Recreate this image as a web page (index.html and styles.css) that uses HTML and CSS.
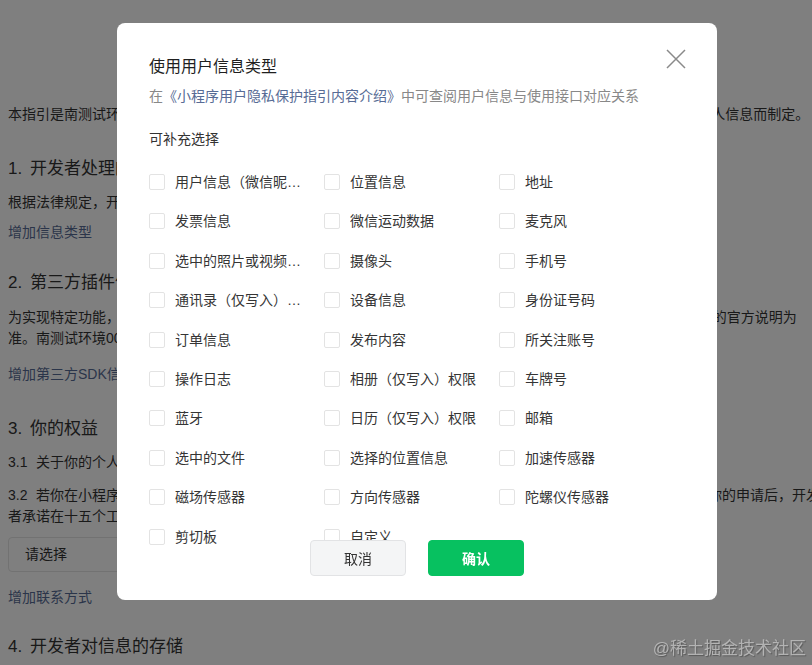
FILE: index.html
```html
<!DOCTYPE html>
<html lang="zh-CN">
<head>
<meta charset="utf-8">
<title>用户隐私保护指引</title>
<link rel="stylesheet" href="styles.css">
</head>
<body>
<main class="guide">
  <p class="lead">本指引是南测试环境00 小程序开发者 南测试环境0（以下简称开发者）为向你说明在使用小程序过程中处理你的个人信息而制定。</p>

  <h2 class="sec sec-1"><span class="sec-num">1.</span>开发者处理的信息</h2>
  <p class="text text-law">根据法律规定，开发者仅处理实现小程序功能所必要的信息。</p>
  <a class="add add-info" href="#">增加信息类型</a>

  <h2 class="sec sec-2"><span class="sec-num">2.</span>第三方插件信息</h2>
  <p class="text text-plugin">为实现特定功能，开发者可能会需要接入由第三方提供的插件/SDK。第三方插件的个人信息处理规则，请以其公示的官方说明为准。南测试环境00小程序已接入的第三方插件信息如下：</p>
  <a class="add add-sdk" href="#">增加第三方SDK信息</a>

  <h2 class="sec sec-3"><span class="sec-num">3.</span>你的权益</h2>
  <p class="text text-31"><span class="sub-num">3.1</span>关于你的个人信息，你可以随时在小程序中进行查阅、复制、更正或删除。</p>
  <p class="text text-32"><span class="sub-num">3.2</span>若你在小程序中，向开发者提出查阅、复制、更正、补充、删除你的个人信息或撤回授权同意等请求，在收到你的申请后，开发者承诺在十五个工作日内完成核查和处理。</p>
  <div class="select">请选择</div>
  <a class="add add-contact" href="#">增加联系方式</a>

  <h2 class="sec sec-4"><span class="sec-num">4.</span>开发者对信息的存储</h2>
</main>

<div class="mask"></div>

<section class="dialog">
  <h3 class="dialog-title">使用用户信息类型</h3>
  <p class="dialog-desc">在<a class="desc-link" href="#">《小程序用户隐私保护指引内容介绍》</a>中可查阅用户信息与使用接口对应关系</p>
  <p class="dialog-label">可补充选择</p>
  <ul class="options">
    <li class="option"><span class="cb"></span><span class="opt-text">用户信息（微信昵称、头像）</span></li>
    <li class="option"><span class="cb"></span><span class="opt-text">位置信息</span></li>
    <li class="option"><span class="cb"></span><span class="opt-text">地址</span></li>
    <li class="option"><span class="cb"></span><span class="opt-text">发票信息</span></li>
    <li class="option"><span class="cb"></span><span class="opt-text">微信运动数据</span></li>
    <li class="option"><span class="cb"></span><span class="opt-text">麦克风</span></li>
    <li class="option"><span class="cb"></span><span class="opt-text">选中的照片或视频信息</span></li>
    <li class="option"><span class="cb"></span><span class="opt-text">摄像头</span></li>
    <li class="option"><span class="cb"></span><span class="opt-text">手机号</span></li>
    <li class="option"><span class="cb"></span><span class="opt-text">通讯录（仅写入）权限</span></li>
    <li class="option"><span class="cb"></span><span class="opt-text">设备信息</span></li>
    <li class="option"><span class="cb"></span><span class="opt-text">身份证号码</span></li>
    <li class="option"><span class="cb"></span><span class="opt-text">订单信息</span></li>
    <li class="option"><span class="cb"></span><span class="opt-text">发布内容</span></li>
    <li class="option"><span class="cb"></span><span class="opt-text">所关注账号</span></li>
    <li class="option"><span class="cb"></span><span class="opt-text">操作日志</span></li>
    <li class="option"><span class="cb"></span><span class="opt-text">相册（仅写入）权限</span></li>
    <li class="option"><span class="cb"></span><span class="opt-text">车牌号</span></li>
    <li class="option"><span class="cb"></span><span class="opt-text">蓝牙</span></li>
    <li class="option"><span class="cb"></span><span class="opt-text">日历（仅写入）权限</span></li>
    <li class="option"><span class="cb"></span><span class="opt-text">邮箱</span></li>
    <li class="option"><span class="cb"></span><span class="opt-text">选中的文件</span></li>
    <li class="option"><span class="cb"></span><span class="opt-text">选择的位置信息</span></li>
    <li class="option"><span class="cb"></span><span class="opt-text">加速传感器</span></li>
    <li class="option"><span class="cb"></span><span class="opt-text">磁场传感器</span></li>
    <li class="option"><span class="cb"></span><span class="opt-text">方向传感器</span></li>
    <li class="option"><span class="cb"></span><span class="opt-text">陀螺仪传感器</span></li>
    <li class="option"><span class="cb"></span><span class="opt-text">剪切板</span></li>
    <li class="option"><span class="cb"></span><span class="opt-text">自定义</span></li>
  </ul>
  <div class="dialog-footer">
    <button class="btn btn-cancel" type="button">取消</button>
    <button class="btn btn-ok" type="button">确认</button>
  </div>
  <button class="dialog-close" type="button" aria-label="关闭">
    <svg width="20" height="20" viewBox="0 0 20 20"><path d="M1 1L19 19M19 1L1 19" stroke="#8a8a8a" stroke-width="1.5" fill="none"/></svg>
  </button>
</section>

<div class="watermark">@稀土掘金技术社区</div>
</body>
</html>
```

FILE: styles.css
```css
html, body {
  margin: 0;
  padding: 0;
  overflow: hidden;
  background: #fff;
}
body {
  font-family: "Liberation Sans", "Noto Sans CJK SC", sans-serif;
  font-size: 14px;
  color: #333;
}
.guide {
  width: 814px;
  padding: 104px 0 0 8px;
}
.lead, .text {
  margin: 0;
  line-height: 21px;
  font-size: 14px;
  color: #333;
}
.sec {
  margin: 0;
  font-size: 17px;
  font-weight: normal;
  line-height: 24px;
  color: #333;
}
.sec-num {
  display: inline-block;
  width: 22px;
}
.sub-num {
  display: inline-block;
  width: 28px;
}
.add {
  display: block;
  width: max-content;
  line-height: 21px;
  font-size: 14px;
  color: #576b95;
  text-decoration: none;
}
.sec-1 { margin-top: 32px; }
.text-law { margin-top: 11px; }
.add-info { margin-top: 9px; }
.sec-2 { margin-top: 28px; }
.text-plugin { margin-top: 12px; }
.add-sdk { margin-top: 15px; }
.sec-3 { margin-top: 32px; }
.text-31 { margin-top: 11px; }
.text-32 { margin-top: 12px; }
.select {
  margin-top: 10px;
  box-sizing: border-box;
  width: 380px;
  height: 35px;
  border: 1px solid #e4e4e4;
  border-radius: 4px;
  padding-left: 16px;
  line-height: 33px;
  color: #333;
}
.add-contact { margin-top: 15px; }
.sec-4 { margin-top: 27px; }

.mask {
  position: fixed;
  inset: 0;
  background: rgba(0, 0, 0, 0.5);
}

.dialog {
  position: fixed;
  left: 117px;
  top: 23px;
  width: 600px;
  height: 577px;
  box-sizing: border-box;
  padding: 32px 32px 0;
  background: #fff;
  border-radius: 8px;
}
.dialog-title {
  margin: 0;
  font-size: 16px;
  font-weight: normal;
  line-height: 24px;
  color: #1f1f1f;
}
.dialog-desc {
  margin: 7px 0 0;
  font-size: 14px;
  line-height: 20px;
  color: #888;
}
.desc-link {
  color: #576b95;
  text-decoration: none;
}
.dialog-label {
  margin: 23px 0 0;
  font-size: 14px;
  line-height: 20px;
  color: #333;
}
.options {
  list-style: none;
  margin: 13.3px 0 0;
  padding: 0;
  display: grid;
  grid-template-columns: repeat(3, 175px);
  grid-auto-rows: 39.4px;
}
.option {
  display: flex;
  align-items: center;
}
.cb {
  flex: none;
  box-sizing: border-box;
  width: 16px;
  height: 16px;
  border: 1px solid #e3e3e3;
  border-radius: 2px;
  background: #fff;
  margin-right: 10px;
}
.opt-text {
  max-width: 130px;
  white-space: nowrap;
  overflow: hidden;
  text-overflow: ellipsis;
  font-size: 14px;
  line-height: 20px;
  color: #353535;
}
.dialog-footer {
  position: absolute;
  left: 0;
  right: 0;
  bottom: 24px;
  display: flex;
  justify-content: center;
  gap: 22px;
}
.btn {
  box-sizing: border-box;
  width: 96px;
  height: 36px;
  border-radius: 4px;
  font-family: inherit;
  font-size: 14px;
  cursor: pointer;
}
.btn-cancel {
  background: #f4f5f6;
  border: 1px solid #e2e3e5;
  color: #333;
}
.btn-ok {
  background: #07c160;
  border: 1px solid #07c160;
  color: #fff;
  font-weight: bold;
}
.dialog-close {
  position: absolute;
  left: 549px;
  top: 26px;
  width: 20px;
  height: 20px;
  padding: 0;
  border: 0;
  background: transparent;
  display: flex;
}

.watermark {
  position: fixed;
  right: 6px;
  bottom: 4px;
  font-size: 17px;
  line-height: 24px;
  color: rgba(195, 195, 195, 0.8);
  text-shadow: 1px 1px 1px rgba(0, 0, 0, 0.3);
}
```
